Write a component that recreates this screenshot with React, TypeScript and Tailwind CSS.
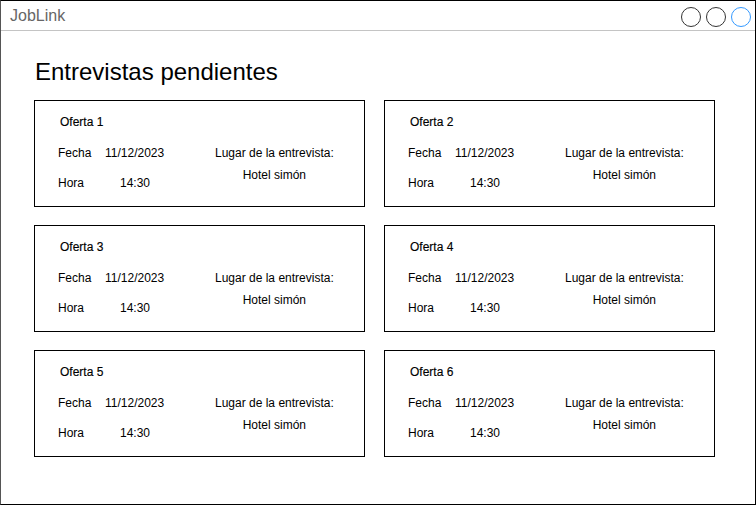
const offers = [1, 2, 3, 4, 5, 6];

function OfferCard({ n }: { n: number }) {
  return (
    <div className="h-[107px] border border-black pt-[14px] pl-[23px] text-[12px] leading-[14px] text-black">
      <div className="ml-[2px] [-webkit-text-stroke:0.15px_black]">Oferta {n}</div>
      <div className="flex mt-[17px]">
        {/* Fecha / Hora */}
        <div className="w-[157px]">
          <div className="flex">
            <span className="w-[47px]">Fecha</span>
            <span>11/12/2023</span>
          </div>
          <div className="flex mt-[16px]">
            <span className="w-[62px]">Hora</span>
            <span>14:30</span>
          </div>
        </div>
        {/* Lugar */}
        <div className="flex flex-col items-center">
          <span>Lugar de la entrevista:</span>
          <span className="mt-[8px]">Hotel simón</span>
        </div>
      </div>
    </div>
  );
}

export default function App() {
  return (
    <div className="w-[756px] h-[505px] bg-white border border-black border-l-[#555] flex flex-col font-['Liberation_Sans',Arial,Helvetica,sans-serif]">
      <header className="h-[30px] shrink-0 border-b border-[#c4c4c4] flex items-center justify-between pl-[9px] pr-[4px]">
        <span className="text-[16px] leading-[18px] text-[#666]">JobLink</span>
        <div className="flex gap-[5px] mt-[2px]">
          <div className="w-[20px] h-[20px] rounded-full border border-[#333]" />
          <div className="w-[20px] h-[20px] rounded-full border border-[#333]" />
          <div className="w-[20px] h-[20px] rounded-full border border-[#3399ff]" />
        </div>
      </header>

      <main className="pl-[33px] pt-[28px]">
        <h1 className="text-[24px] leading-[26px] text-black ml-[1px]">Entrevistas pendientes</h1>
        <div className="grid grid-cols-[331px_331px] gap-x-[19px] gap-y-[18px] mt-[15px]">
          {offers.map((n) => (
            <OfferCard key={n} n={n} />
          ))}
        </div>
      </main>
    </div>
  );
}
